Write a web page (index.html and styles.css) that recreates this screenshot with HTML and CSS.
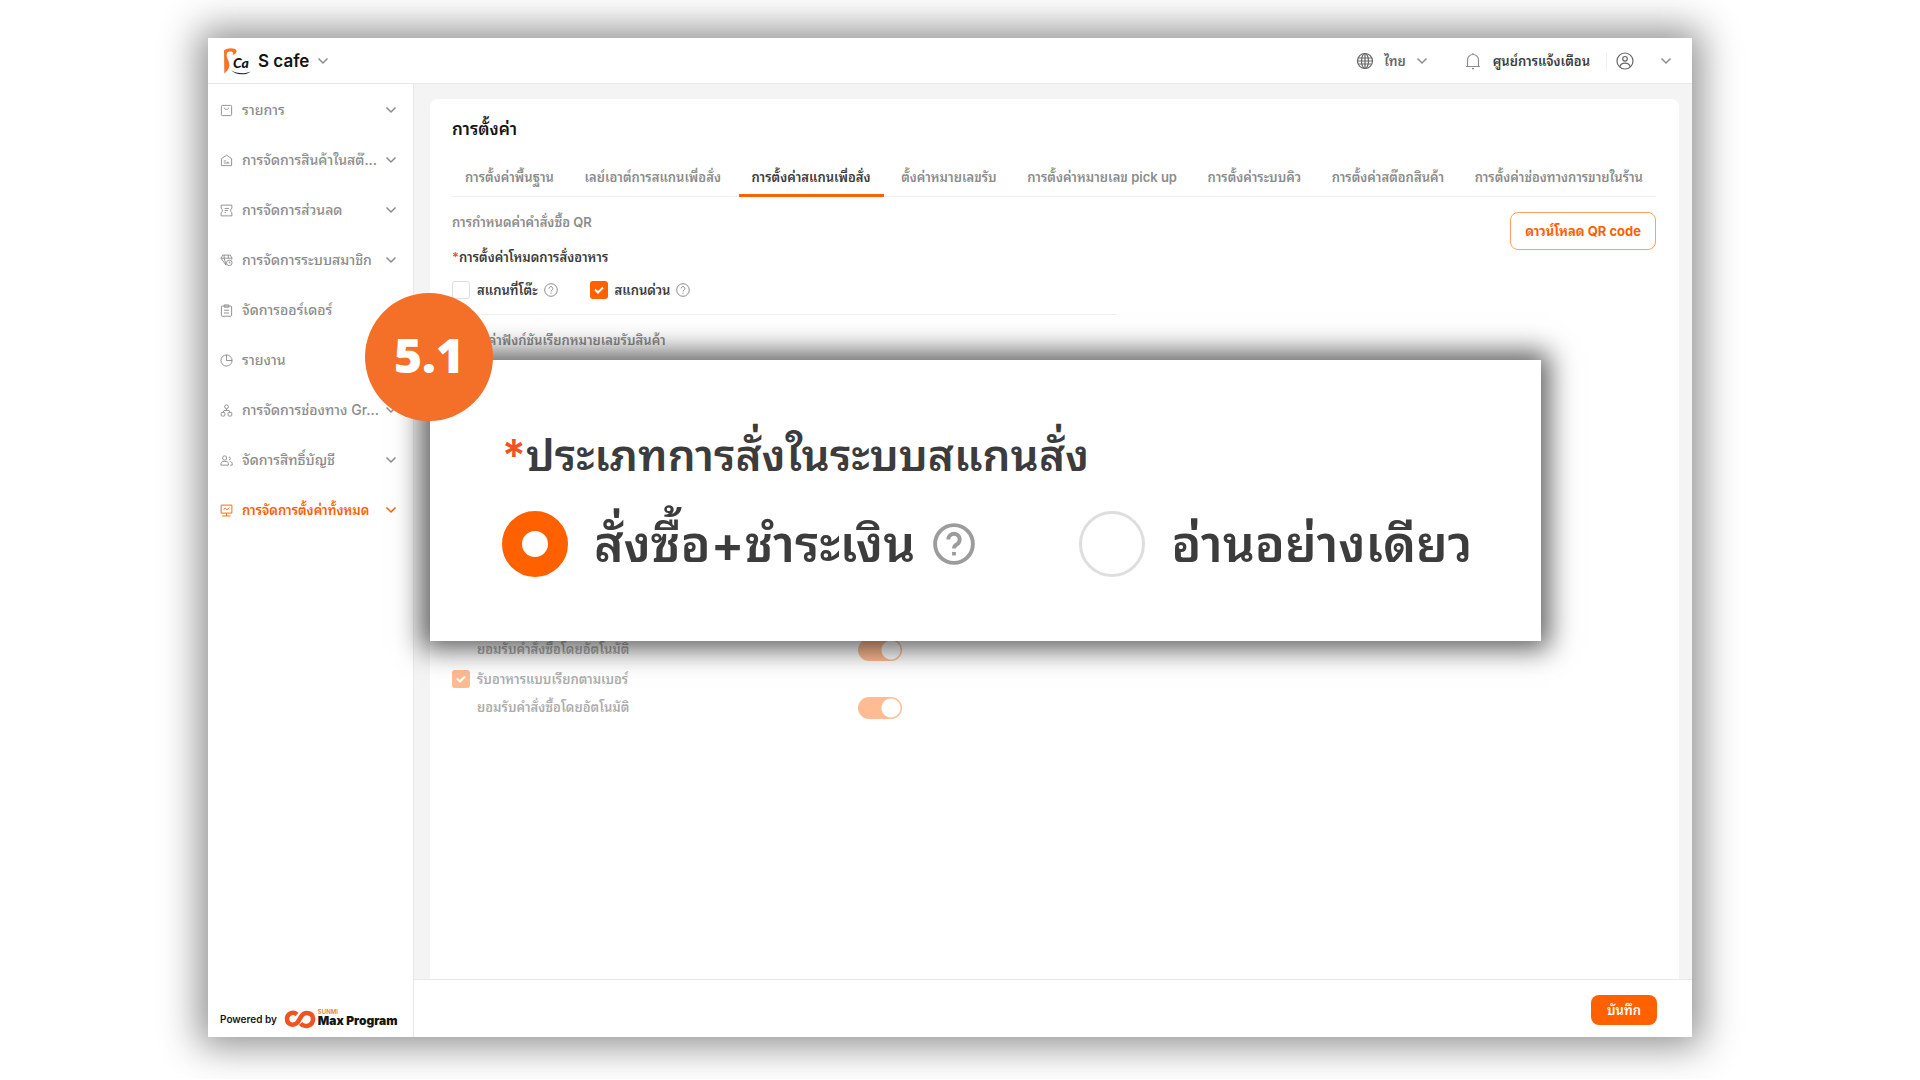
FILE: index.html
```html
<!DOCTYPE html>
<html lang="th">
<head>
<meta charset="utf-8">
<title>S cafe - การตั้งค่า</title>
<link rel="stylesheet" href="styles.css">
</head>
<body>
<svg class="defs" aria-hidden="true">
  <symbol id="chev" viewBox="0 0 12 12"><path d="M1.500 3.500 6 8l4.500-4.500"/></symbol>
  <symbol id="help" viewBox="0 0 14 14"><circle cx="7" cy="7" r="6.300"/><path d="M5.100 5.500a1.900 1.900 0 1 1 2.900 1.600c-.7.4-1 .7-1 1.400M7 9.700v1.100"/></symbol>
  <symbol id="i-menu" viewBox="0 0 14 14"><rect x="1.500" y="1.500" width="11" height="11" rx="1"/><path d="M4.500 3.800c.2 2.700 4.800 2.700 5 0"/></symbol>
  <symbol id="i-stock" viewBox="0 0 14 14"><path d="M1.500 5 7 1.200 12.500 5v7.500h-11zM4 7.500h2.500M4 9.700h6M8.500 8v1.700"/></symbol>
  <symbol id="i-coupon" viewBox="0 0 14 14"><path d="M1.200 1.200h11.600v3.300c-1.800 1-1.800 4 0 5v3.300H1.200V9.500c1.800-1 1.800-4 0-5zM5 4.800h4.500M5 7h3.500M5 9.200h1.500"/></symbol>
  <symbol id="i-member" viewBox="0 0 14 14"><path d="M3 1.200h8l2 3.300H1zM1 4.500l5.500 7.500M13 4.500 12.500 6M4.500 4.500 6.500 12M4.500 1.200v3.300M9 1.200v3.300"/><circle cx="10" cy="9.500" r="3"/><path d="M10 8v1.700h1.200"/></symbol>
  <symbol id="i-order" viewBox="0 0 14 14"><rect x="1.500" y="2.200" width="11" height="11" rx="1"/><path d="M4.500 1h5v2.400h-5zM4.300 6.700h5.400M4.300 9.700h5.400"/></symbol>
  <symbol id="i-report" viewBox="0 0 14 14"><circle cx="7" cy="7" r="6"/><path d="M7 1v6h6"/></symbol>
  <symbol id="i-channel" viewBox="0 0 14 14"><circle cx="7" cy="3" r="2"/><rect x="1.300" y="9" width="4" height="4" rx="1"/><rect x="8.700" y="9" width="4" height="4" rx="1"/><path d="M7 5v2M3.300 9l1-2h5.400l1 2"/></symbol>
  <symbol id="i-users" viewBox="0 0 14 14"><circle cx="5" cy="4.300" r="2.300"/><path d="M1 12V10.500C1 8.500 2.500 8 5 8s4 .5 4 2.500V12zM9.500 3.200a1.600 1.600 0 0 1 0 3.200M10.500 8.200c2 .2 2.700 1 2.700 2.300V12H11"/></symbol>
  <symbol id="i-config" viewBox="0 0 14 14"><path d="M1.200 1.200h11.600v8.600H1.200zM3.800 6l2-1.500L7.500 6.300 10 4M7 9.800v3M2.500 12.900h9"/></symbol>
</svg>

<div class="stage">
  <div class="window">
    <header class="topbar">
      <button class="store" type="button">
        <svg class="store-logo" viewBox="0 0 30 28" role="img" aria-label="S cafe">
          <path class="logo-orange" d="M2 3.500C5 .5 13 .2 14.500 3.500 15 6 12.500 7.500 10.500 8c1-2 .5-4-3-3.500C4.500 5 4 8 5.500 11.500 8.500 18 8 22 2.300 26.500z"/>
          <text class="logo-text" x="11" y="21">Ca</text>
          <path class="logo-swash" d="M9 23c5 3.500 13 4.500 20 1.500-6 4.500-16 3.500-20-1.500z"/>
        </svg>
        <span class="store-name">S cafe</span>
        <svg class="chev"><use href="#chev"/></svg>
      </button>
      <div class="topbar-right">
        <button class="lang" type="button">
          <svg class="globe" viewBox="0 0 18 18"><circle cx="9" cy="9" r="7.500"/><ellipse cx="9" cy="9" rx="3.500" ry="7.500"/><path d="M9 1.500v15M2.300 6h13.400M2.300 12h13.400M1.500 9h15"/></svg>
          ไทย
          <svg class="chev"><use href="#chev"/></svg>
        </button>
        <button class="notice" type="button">
          <svg class="bell" viewBox="0 0 18 18"><path d="M3.500 14.500V8a5.500 5.500 0 0 1 11 0v6.500M2 14.500h14M9 2.500V1M8 16.700h2"/></svg>
          ศูนย์การแจ้งเตือน
        </button>
        <button class="account" type="button" aria-label="บัญชี">
          <svg class="avatar" viewBox="0 0 18 18"><circle cx="9" cy="9" r="8"/><circle cx="9" cy="6.800" r="2.300"/><path d="M3.800 14.800c.7-2.600 2.600-3.600 5.200-3.600s4.500 1 5.200 3.600"/></svg>
          <svg class="chev"><use href="#chev"/></svg>
        </button>
      </div>
    </header>

    <div class="body">
      <aside class="sidebar">
        <nav class="menu">
          <a class="menu-item" href="#"><svg class="mi"><use href="#i-menu"/></svg><span class="menu-label">รายการ</span><svg class="chev"><use href="#chev"/></svg></a>
          <a class="menu-item" href="#"><svg class="mi"><use href="#i-stock"/></svg><span class="menu-label">การจัดการสินค้าในสต๊...</span><svg class="chev"><use href="#chev"/></svg></a>
          <a class="menu-item" href="#"><svg class="mi"><use href="#i-coupon"/></svg><span class="menu-label">การจัดการส่วนลด</span><svg class="chev"><use href="#chev"/></svg></a>
          <a class="menu-item" href="#"><svg class="mi"><use href="#i-member"/></svg><span class="menu-label">การจัดการระบบสมาชิก</span><svg class="chev"><use href="#chev"/></svg></a>
          <a class="menu-item" href="#"><svg class="mi"><use href="#i-order"/></svg><span class="menu-label">จัดการออร์เดอร์</span></a>
          <a class="menu-item" href="#"><svg class="mi"><use href="#i-report"/></svg><span class="menu-label">รายงาน</span></a>
          <a class="menu-item" href="#"><svg class="mi"><use href="#i-channel"/></svg><span class="menu-label">การจัดการช่องทาง Gr...</span><svg class="chev"><use href="#chev"/></svg></a>
          <a class="menu-item" href="#"><svg class="mi"><use href="#i-users"/></svg><span class="menu-label">จัดการสิทธิ์บัญชี</span><svg class="chev"><use href="#chev"/></svg></a>
          <a class="menu-item active" href="#"><svg class="mi"><use href="#i-config"/></svg><span class="menu-label">การจัดการตั้งค่าทั้งหมด</span><svg class="chev"><use href="#chev"/></svg></a>
        </nav>
        <div class="powered">
          <span class="powered-by">Powered by</span>
          <svg class="sunmi" viewBox="0 0 32 20"><path d="M13 5.500C9 2 3 4.500 3 10s6.500 7.500 10.500 3.500l4-6.500C20.500 2.500 29 3 29 10s-8.500 9-12.500 4.500"/></svg>
          <span class="brand"><span class="brand-top">SUNMI</span><span class="brand-name">Max Program</span></span>
        </div>
      </aside>

      <div class="content">
        <main class="card">
          <h1 class="title">การตั้งค่า</h1>
          <nav class="tabs">
            <a class="tab" href="#">การตั้งค่าพื้นฐาน</a>
            <a class="tab" href="#">เลย์เอาต์การสแกนเพื่อสั่ง</a>
            <a class="tab current" href="#">การตั้งค่าสแกนเพื่อสั่ง</a>
            <a class="tab" href="#">ตั้งค่าหมายเลขรับ</a>
            <a class="tab" href="#">การตั้งค่าหมายเลข pick up</a>
            <a class="tab" href="#">การตั้งค่าระบบคิว</a>
            <a class="tab" href="#">การตั้งค่าสต๊อกสินค้า</a>
            <a class="tab" href="#">การตั้งค่าช่องทางการขายในร้าน</a>
          </nav>
          <div class="panel">
            <div class="settings">
              <h2 class="section">การกำหนดค่าคำสั่งซื้อ QR</h2>
              <p class="field-title"><span class="req">*</span>การตั้งค่าโหมดการสั่งอาหาร</p>
              <div class="modes">
                <label class="check"><input type="checkbox"><span>สแกนที่โต๊ะ</span><svg class="help"><use href="#help"/></svg></label>
                <label class="check"><input type="checkbox" checked><span>สแกนด่วน</span><svg class="help"><use href="#help"/></svg></label>
              </div>
              <h2 class="section">การตั้งค่าฟังก์ชันเรียกหมายเลขรับสินค้า</h2>
              <div class="pickup">
                <label class="switch-row"><span>ยอมรับคำสั่งซื้อโดยอัตโนมัติ</span><input class="switch" type="checkbox" checked></label>
                <label class="check"><input type="checkbox" checked><span>รับอาหารแบบเรียกตามเบอร์</span></label>
                <label class="switch-row"><span>ยอมรับคำสั่งซื้อโดยอัตโนมัติ</span><input class="switch" type="checkbox" checked></label>
              </div>
            </div>
            <button class="download" type="button">ดาวน์โหลด QR code</button>
          </div>
        </main>
        <footer class="actions"><button class="save" type="button">บันทึก</button></footer>
      </div>
    </div>
  </div>

  <section class="callout">
    <h2 class="callout-title"><span class="req">*</span>ประเภทการสั่งในระบบสแกนสั่ง</h2>
    <div class="options">
      <label class="option"><input type="radio" name="order-type" checked><span>สั่งซื้อ+ชำระเงิน</span><svg class="help-lg"><use href="#help"/></svg></label>
      <label class="option"><input type="radio" name="order-type"><span>อ่านอย่างเดียว</span></label>
    </div>
  </section>
  <div class="step">5.1</div>
</div>
</body>
</html>
```
FILE: styles.css
```css
* { box-sizing: border-box; }
body {
  margin: 0;
  background: #fff;
  color: #3c3c3c;
  font-family: Inter, Thonburi, "Noto Sans Thai Looped", Loma, Garuda, "Noto Sans Thai", sans-serif;
  font-size: 13px;
  line-height: 20px;
}
button { font: inherit; color: inherit; background: none; border: 0; padding: 0; cursor: pointer; }
a { color: inherit; text-decoration: none; }
h1, h2, p { margin: 0; }
svg { fill: none; stroke: currentColor; flex: none; }
.defs { display: none; }

.stage { position: relative; margin: 38px 228px 0 208px; padding-bottom: 42px; }
.window {
  display: flex;
  flex-direction: column;
  min-height: calc(100vh - 81px);
  background: #fff;
  box-shadow: 0 0 36px 9px rgba(0, 0, 0, .44);
}

/* Top bar */
.topbar {
  display: flex;
  justify-content: space-between;
  align-items: center;
  height: 46px;
  padding: 0 20px 0 14px;
  border-bottom: 1px solid #e8e8e8;
}
.store, .lang, .notice, .account { display: flex; align-items: center; }
.store-logo { width: 30px; height: 28px; margin-right: 6px; }
.logo-orange { fill: #f47629; stroke: none; }
.logo-swash { fill: #151515; stroke: none; }
.logo-text { fill: #151515; stroke: none; font: italic 900 14px Lato, sans-serif; }
.store-name { color: #151515; font-size: 17px; font-weight: 600; }
.chev { width: 12px; height: 12px; color: #8c8c8c; stroke-width: 1.5; }
.store .chev { margin-left: 8px; }
.topbar-right { display: flex; align-items: center; font-weight: 600; }
.lang { gap: 10px; color: #666; }
.globe, .bell, .avatar { width: 18px; height: 18px; stroke-width: 1.2; }
.bell { color: #8c8c8c; }
.notice { gap: 11px; margin-left: 36px; padding-right: 16px; border-right: 1px solid #f0f0f0; line-height: 16px; }
.account { gap: 26px; padding-left: 9px; color: #666; }

.body { display: flex; flex: 1; }

/* Sidebar */
.sidebar {
  display: flex;
  flex-direction: column;
  justify-content: space-between;
  width: 206px;
  flex: none;
  border-right: 1px solid #e8e8e8;
}
.menu { padding-top: 1px; }
.menu-item {
  display: flex;
  align-items: center;
  height: 50px;
  padding: 0 16px 0 12px;
  color: #8c8c8c;
  font-size: 14px;
  font-weight: 500;
}
.mi { width: 13px; height: 13px; margin-right: 9px; }
.menu-label { flex: 1; white-space: nowrap; }
.menu-item.active, .active .chev { color: #ff6000; }
.menu-item.active { font-size: 13px; font-weight: 600; }
.powered { display: flex; align-items: center; gap: 7px; padding: 0 12px 8px; color: #151515; }
.powered-by { font-size: 10px; font-weight: 600; }
.sunmi { width: 32px; height: 20px; color: #f0531f; stroke-width: 4.5; }
.brand { display: flex; flex-direction: column; margin-left: -5px; }
.brand-top { color: #f47629; font-size: 6px; font-weight: 600; line-height: 4px; }
.brand-name { font-size: 12px; font-weight: 900; line-height: 14px; white-space: nowrap; }

/* Content */
.content { display: flex; flex-direction: column; flex: 1; min-width: 0; background: #f4f4f4; }
.card { flex: 1; margin: 15px 13px 0 16px; padding: 20px 23px 20px 22px; border-radius: 8px 8px 0 0; background: #fff; }
.title { color: #151515; font-size: 17px; font-weight: 600; line-height: 20px; }
.tabs { display: flex; justify-content: space-between; margin-top: 20px; border-bottom: 1px solid #f0f0f0; }
.tab { padding: 8px 13px 7px; margin-bottom: -1px; border-bottom: 3px solid transparent; color: #8c8c8c; font-weight: 600; white-space: nowrap; }
.tab.current { border-color: #ff6000; color: #3c3c3c; }
.panel { display: flex; justify-content: space-between; align-items: flex-start; padding-top: 15px; }
.settings { width: 664px; }
.section { color: #8c8c8c; font-size: 13px; font-weight: 600; line-height: 20px; }
.field-title { margin-top: 15px; font-weight: 600; }
.req { color: #f0531f; }
.modes { display: flex; gap: 32px; margin-bottom: 15px; padding: 13px 0 14px; border-bottom: 1px solid #f0f0f0; }
.check { display: flex; align-items: center; font-weight: 600; }
input { appearance: none; margin: 0; flex: none; }
.check input { width: 18px; height: 18px; margin-right: 7px; border: 1px solid #dedede; border-radius: 3px; background: #fff; }
.check input:checked {
  border: 0;
  background: #ff6000 url("data:image/svg+xml,%3Csvg xmlns='http://www.w3.org/2000/svg' viewBox='0 0 18 18'%3E%3Cpath d='M5 8.500l3 3 5-5' fill='none' stroke='white' stroke-width='2'/%3E%3C/svg%3E");
}
.help { width: 14px; height: 14px; margin-left: 6px; color: #8c8c8c; }
.pickup { display: flex; flex-direction: column; gap: 8px; margin-top: 289px; opacity: .42; }
.switch-row { display: flex; justify-content: space-between; width: 450px; padding-left: 25px; font-weight: 600; }
.switch { width: 44px; height: 22px; border-radius: 11px; background: radial-gradient(circle at 33px 11px, #fff 9px, #ff6000 10px); }
.download { height: 38px; padding: 0 14px; border: 1px solid #ff9f66; border-radius: 8px; color: #ff6000; font-weight: 700; }
.actions { display: flex; justify-content: flex-end; padding: 15px 35px 12px; border-top: 1px solid #e8e8e8; background: #fff; }
.save { width: 66px; height: 30px; border-radius: 8px; background: #ff6000; color: #fff; font-weight: 600; }

/* Enlarged detail laid over the window */
.callout {
  position: absolute;
  top: 322px;
  left: 222px;
  right: 151px;
  height: 281px;
  padding: 65px 72px;
  background: #fff;
  box-shadow: 0 0 26px 8px rgba(0, 0, 0, .64);
}
.callout-title { font-size: 44px; font-weight: 600; line-height: 60px; white-space: nowrap; }
.options { display: flex; gap: 104px; margin-top: 26px; }
.option { display: flex; align-items: center; font-size: 50px; font-weight: 600; line-height: 66px; white-space: nowrap; }
.option input { width: 66px; height: 66px; margin-right: 26px; border: 3px solid #dedede; border-radius: 50%; }
.option input:checked { border: 20px solid #ff6000; }
.help-lg { width: 42px; height: 42px; margin-left: 18px; color: #9c9c9c; stroke-width: 1.3; }
.step {
  position: absolute;
  top: 255px;
  left: 157px;
  width: 128px;
  height: 128px;
  border-radius: 50%;
  background: #f47028;
  color: #fff;
  font: 800 48px/124px "Open Sans", sans-serif;
  text-align: center;
}
```
